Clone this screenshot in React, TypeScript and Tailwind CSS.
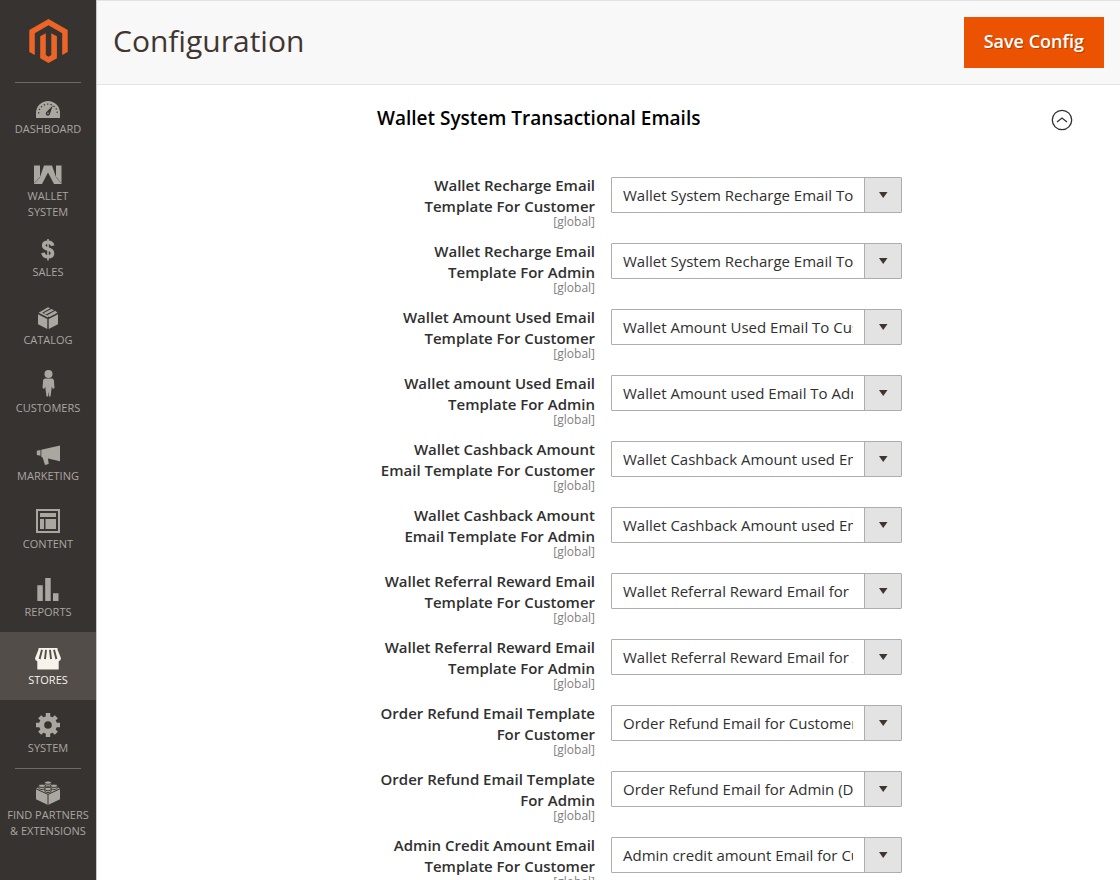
import { ReactNode } from "react";
import clsx from "clsx";

type TMenuItem = {
  label: string;
  icon: ReactNode;
  active?: boolean;
  divided?: boolean;
};

type TField = {
  label: string;
  value: string;
};

const menuItems: TMenuItem[] = [
  {
    label: "Dashboard",
    divided: true,
    icon: (
      <>
        <path d="M2 27V22a12 12 0 0 1 24 0v5z" />
        <g stroke="#373330" strokeWidth="1.2" fill="none">
          <path d="M4.7 22.4a9.3 9.3 0 0 1 18.6 0" strokeDasharray="1.3 2.1" />
        </g>
        <path d="M18.8 14.4 15.9 23a2.1 2.1 0 1 1-3.2-2.2z" fill="#373330" />
        <circle cx="14" cy="22.3" r="0.8" />
      </>
    ),
  },
  {
    label: "Wallet System",
    icon: (
      <>
        <path d="M0 7.5h6v11.5L10 7.5h8L22 19v-11.5h5.5V26H20L14 14.5 8 26H0z" />
        <path d="M0 25.5 6 19M27.5 25.5 22 19" stroke="#77736f" strokeWidth="1" />
      </>
    ),
  },
  {
    label: "Sales",
    icon: (
      <>
        <path
          d="M18.6 11.8C18.2 9.200 16.600 8.300 14 8.300c-2.800 0-4.300 1.200-4.300 3.100 0 2.300 1.800 3 4.300 3.600 2.800.7 4.500 1.700 4.500 4.200 0 2.400-1.700 3.600-4.500 3.600-3.100 0-4.600-1.400-4.900-4.100"
          fill="none"
          stroke="currentColor"
          strokeWidth="3.600"
        />
        <path d="M13.200 5h1.600v21.500h-1.600z" />
      </>
    ),
  },
  {
    label: "Catalog",
    icon: (
      <>
        <path d="M4 12.200 13.300 16.900V27L4 22.200zM24 12.200 14.700 16.900V27L24 22.200z" />
        <path d="M14 5.300 16.200 6.300 8.200 10.800 14.600 14.200 13.900 15.600 4.600 10.800zM17.400 6.900 20 8.200 12 12.500 9.700 11.100zM21.200 8.700 23.500 10.800 15.500 14.900 13.200 13.300z" />
      </>
    ),
  },
  {
    label: "Customers",
    icon: (
      <>
        <circle cx="14.500" cy="4" r="4" />
        <path d="M11.300 8.600h6.400c1.300 0 2 .8 2.200 2l.6 7.400-1.700 1-1-2.500-.3 2.500-1 7.400h-1.500l-.5-5-.5 5h-1.500l-1-7.400-.3-2.500-1 2.500-1.700-1 .6-7.400c.2-1.200.9-2 2.200-2z" />
      </>
    ),
  },
  {
    label: "Marketing",
    icon: (
      <path d="M2.800 12.800l3.700-.8v5.800l-3.700-.8zM7.300 11.800 26 7.500v15.800l-12-2.900.7 5.600-3.700.9-2.300-7.200-1.400-.9z" />
    ),
  },
  {
    label: "Content",
    icon: (
      <path
        fillRule="evenodd"
        d="M2 3h24v24H2zM4 5v20h20V5zM6 7h16v4H6zM6 13h4v10H6zM11.500 13H22v10H11.500z"
      />
    ),
  },
  {
    label: "Reports",
    icon: <path d="M3.300 11.300h5.500V27H3.300zM11.200 4h5.500v23h-5.500zM19 19.300h5.500V27H19z" />,
  },
  {
    label: "Stores",
    active: true,
    icon: (
      <>
        <path d="M3.300 17.500h21.400v10H3.300z" />
        <path d="M4.500 6h19v1.600l3.500 8.700a3 3 0 0 1-5.700 1.200 3 3 0 0 1-4.900 0 3 3 0 0 1-4.800 0 3 3 0 0 1-4.900 0A3 3 0 0 1 1 16.300l3.500-8.700z" />
        <path
          d="M8 7.800 5.600 17M12 7.800l-1 9.200M16 7.800l1 9.200M20 7.800l2.400 9.200"
          stroke="#524d49"
          strokeWidth="1.900"
        />
      </>
    ),
  },
  {
    label: "System",
    icon: (
      <>
        <path
          fillRule="evenodd"
          d="M14 6a9 9 0 1 0 0 18 9 9 0 0 0 0-18zm0 5.200a3.800 3.800 0 1 1 0 7.600 3.800 3.800 0 0 1 0-7.600z"
        />
        <g fill="none" stroke="currentColor" strokeWidth="4.400">
          <path d="M14 3v5M14 22v5M2 15h5M21 15h5M5.700 6.700l3.400 3.400M18.900 19.900l3.400 3.400M5.700 23.300l3.400-3.400M18.900 10.100l3.400-3.400" />
        </g>
      </>
    ),
  },
  {
    label: "Find Partners & Extensions",
    divided: true,
    icon: (
      <>
        <path d="M2 11.500 14 6l12 5.500v10.800L14 28 2 22.300z" />
        <path d="M2 11.800 14 17.400l12-5.600M14 17.400V28" fill="none" stroke="#373330" />
        <g stroke="#373330" strokeWidth="0.900">
          <path d="M10.800 5.800v2c0 2 6.400 2 6.400 0v-2zM4.800 9v2c0 2 6.400 2 6.400 0V9zM16.800 9v2c0 2 6.400 2 6.400 0V9zM10.800 12v2c0 2 6.400 2 6.400 0v-2z" />
          <ellipse cx="14" cy="5.600" rx="3.400" ry="1.700" />
          <ellipse cx="8" cy="8.800" rx="3.400" ry="1.700" />
          <ellipse cx="20" cy="8.800" rx="3.400" ry="1.700" />
          <ellipse cx="14" cy="12" rx="3.400" ry="1.700" />
        </g>
      </>
    ),
  },
];

const fields: TField[] = [
  {
    label: "Wallet Recharge Email Template For Customer",
    value: "Wallet System Recharge Email To Customer (Default)",
  },
  {
    label: "Wallet Recharge Email Template For Admin",
    value: "Wallet System Recharge Email To Admin (Default)",
  },
  {
    label: "Wallet Amount Used Email Template For Customer",
    value: "Wallet Amount Used Email To Customer (Default)",
  },
  {
    label: "Wallet amount Used Email Template For Admin",
    value: "Wallet Amount used Email To Admin (Default)",
  },
  {
    label: "Wallet Cashback Amount Email Template For Customer",
    value: "Wallet Cashback Amount used Email To Customer (Default)",
  },
  {
    label: "Wallet Cashback Amount Email Template For Admin",
    value: "Wallet Cashback Amount used Email To Admin (Default)",
  },
  {
    label: "Wallet Referral Reward Email Template For Customer",
    value: "Wallet Referral Reward Email for Customer (Default)",
  },
  {
    label: "Wallet Referral Reward Email Template For Admin",
    value: "Wallet Referral Reward Email for Admin (Default)",
  },
  {
    label: "Order Refund Email Template For Customer",
    value: "Order Refund Email for Customer (Default)",
  },
  {
    label: "Order Refund Email Template For Admin",
    value: "Order Refund Email for Admin (Default)",
  },
  {
    label: "Admin Credit Amount Email Template For Customer",
    value: "Admin credit amount Email for Customer (Default)",
  },
];

function Logo() {
  return (
    <svg viewBox="0 0 40 46" className="h-[46px] w-10" fill="#ec6527">
      <path d="M20.500 1 39.700 12v22l-5.500 3.100V15.200L20.500 7.300 6.800 15.200v21.900L1.300 34V12z" />
      <path d="M12.200 18.300 17.800 15.200V37l2.700 1.700 2.800-1.700V15.200l5.600 3.100v22L20.500 45l-8.300-4.700z" />
    </svg>
  );
}

function MenuItem({ item }: { item: TMenuItem }) {
  return (
    <li>
      {item.divided && <hr className="mx-[15px] border-[#736963]" />}
      <a
        href="#"
        className={clsx(
          "flex flex-col items-center gap-0.5 pb-1 text-center text-[11px] leading-4 uppercase",
          item.divided ? "min-h-[65px] pt-2" : "min-h-[68px] pt-2.5",
          item.label === "Wallet System" ? "px-5" : "px-1",
          item.active ? "bg-[#524d49] text-[#f7f3eb]" : "text-[#aaa6a0]"
        )}
      >
        <svg viewBox="0 0 28 28" className="size-7 shrink-0" fill="currentColor">
          {item.icon}
        </svg>
        <span>{item.label}</span>
      </a>
    </li>
  );
}

function Field({ field, id }: { field: TField; id: string }) {
  return (
    <div className="grid grid-cols-[218fr_291fr_155fr] gap-x-4">
      <label htmlFor={id} className="text-right text-[#303030]">
        <span className="block text-[15px] leading-[21px] font-semibold">{field.label}</span>
        <span className="block text-xs leading-[10px] text-[#808080]">[global]</span>
      </label>
      <div className="relative mt-0.5 h-9">
        <select
          id={id}
          className="h-9 w-full appearance-none rounded-[1px] border border-[#adadad] bg-white pr-12 pl-[11px] text-[15px] text-[#303030]"
        >
          <option>{field.value}</option>
        </select>
        <span className="pointer-events-none absolute inset-y-px right-px flex w-[37px] items-center justify-center border-l border-[#adadad] bg-[#e3e3e3]">
          <svg viewBox="0 0 10 6" className="h-1.5 w-2.5" fill="#41362f">
            <path d="M1 0h8.500L5.200 6z" />
          </svg>
        </span>
      </div>
    </div>
  );
}

export default function App() {
  return (
    <div className="flex h-screen overflow-hidden bg-white font-['Open_Sans','Noto_Sans',sans-serif]">
      <nav className="w-[97px] shrink-0 border-r border-[#cac8c6] bg-[#373330]">
        <a href="#" aria-label="Magento" className="flex justify-center py-[18px]">
          <Logo />
        </a>
        <ul>
          {menuItems.map((item) => (
            <MenuItem key={item.label} item={item} />
          ))}
        </ul>
      </nav>

      <main className="min-w-0 flex-1">
        <header className="flex items-start justify-between border-y border-[#e3e3e3] bg-[#f8f8f8] p-4">
          <h1 className="text-[30px] leading-[48px] text-[#41362f]">Configuration</h1>
          <button
            type="button"
            className="h-[51px] bg-[#eb5202] px-5 pb-1 text-lg font-semibold text-white [text-shadow:1px_1px_0_rgba(0,0,0,0.25)]"
          >
            Save Config
          </button>
        </header>

        <section className="pr-[47px] pl-[280px]">
          <h2>
            <button
              type="button"
              aria-expanded="true"
              className="flex w-full items-end justify-between pt-5 text-left text-[19px] leading-[26px] font-semibold text-black"
            >
              Wallet System Transactional Emails
              <svg viewBox="0 0 22 22" className="size-[22px]" fill="none" stroke="#303030" strokeWidth="1.300">
                <circle cx="11" cy="11" r="9.700" />
                <path d="M6 13l5-4 5 4" />
              </svg>
            </button>
          </h2>
          <div className="mt-11 flex flex-col gap-3.5">
            {fields.map((field, index) => (
              <Field key={field.label} field={field} id={`email-template-${index}`} />
            ))}
          </div>
        </section>
      </main>
    </div>
  );
}
